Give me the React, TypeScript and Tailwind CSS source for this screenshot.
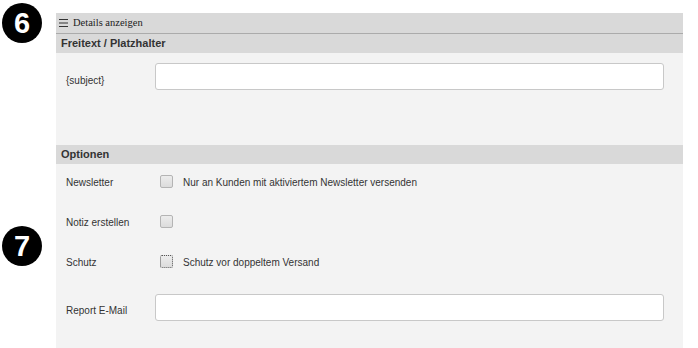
import React from "react";

const Badge = ({ n, className }: { n: string; className?: string }) => (
  <div
    className={
      "w-[40px] h-[40px] rounded-full bg-black text-white flex items-center justify-center text-[29px] font-bold leading-none " +
      (className ?? "")
    }
  >
    {n}
  </div>
);

const SectionHeader = ({ title }: { title: string }) => (
  <div className="h-[19px] bg-[#d9d9d9] flex items-center pl-[5px] text-[11px] font-bold text-[#333]">
    {title}
  </div>
);

const Checkbox = ({ focused }: { focused?: boolean }) => (
  <div
    className={
      "w-[13px] h-[13px] rounded-[2px] bg-gradient-to-b from-[#ececec] to-[#dcdcdc] " +
      (focused ? "border border-dotted border-[#555]" : "border border-[#b4b4b4]")
    }
  />
);

const CheckRow = ({
  label,
  text,
  focused,
}: {
  label: string;
  text?: string;
  focused?: boolean;
}) => (
  <div className="flex items-start h-[13px]">
    <div className="w-[94px] pt-[2px] leading-[12px]">{label}</div>
    <Checkbox focused={focused} />
    {text && <div className="ml-[10px] pt-[2px] leading-[12px]">{text}</div>}
  </div>
);

const TextInput = () => (
  <input
    type="text"
    className="w-[509px] h-[27px] bg-white border border-[#c8c8c8] rounded-[3px] outline-none"
  />
);

export default function App() {
  return (
    <div className="w-[698px] h-[348px] bg-white flex font-['Liberation_Sans',Arial,sans-serif] overflow-hidden">
      <div className="w-[56px] shrink-0 flex flex-col">
        <Badge n="6" className="mt-[3px] ml-[2px]" />
        <Badge n="7" className="mt-[183px] ml-[2px]" />
      </div>
      <div className="w-[627px] mt-[13px] flex flex-col bg-[#f3f3f3] text-[10px] text-[#333]">
        <div className="h-[21px] bg-[#d9d9d9] border-b border-[#ababab] flex items-center pl-[3px] gap-[5px] font-['Liberation_Serif',serif] text-[10.5px] text-[#222]">
          <svg width="9" height="8" viewBox="0 0 9 8" className="mt-[-1px]">
            <rect x="0" y="0" width="9" height="1" fill="#333" />
            <rect x="0" y="3.5" width="9" height="1" fill="#333" />
            <rect x="0" y="7" width="9" height="1" fill="#333" />
          </svg>
          <span>Details anzeigen</span>
        </div>
        <SectionHeader title="Freitext / Platzhalter" />
        <div className="h-[92px] pl-[10px] pt-[10px]">
          <div className="flex items-start">
            <div className="w-[89px] pt-[12px] leading-[12px]">{"{subject}"}</div>
            <TextInput />
          </div>
        </div>
        <SectionHeader title="Optionen" />
        <div className="pl-[10px] pt-[11px] flex flex-col">
          <CheckRow label="Newsletter" text="Nur an Kunden mit aktiviertem Newsletter versenden" />
          <div className="mt-[27px]">
            <CheckRow label="Notiz erstellen" />
          </div>
          <div className="mt-[27px]">
            <CheckRow label="Schutz" text="Schutz vor doppeltem Versand" focused />
          </div>
          <div className="mt-[26px] flex items-start">
            <div className="w-[89px] pt-[11px] leading-[12px]">Report E-Mail</div>
            <TextInput />
          </div>
        </div>
      </div>
    </div>
  );
}
